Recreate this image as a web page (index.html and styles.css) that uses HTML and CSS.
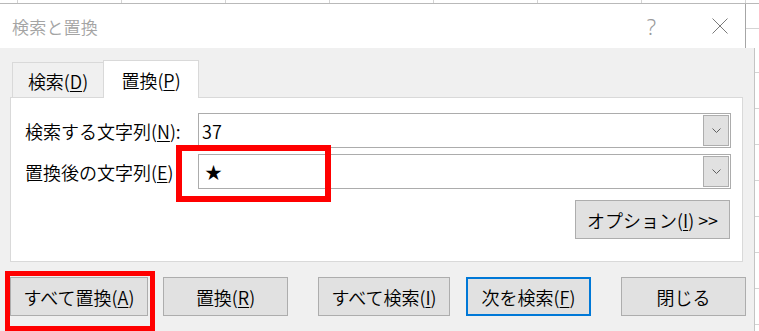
FILE: index.html
```html
<!DOCTYPE html>
<html lang="ja">
<head>
  <meta charset="UTF-8">
  <title>検索と置換</title>
  <link rel="stylesheet" href="styles.css">
</head>
<body>
  <div class="screen">
    <div class="sheet-strip"></div>
    <div class="title-row">
      <div class="titlebar">
        <span class="title">検索と置換</span>
        <span class="help">?</span>
        <svg class="close" width="16" height="16" viewBox="0 0 16 16">
          <path d="M0.5 0.5L15.5 15.5M15.5 0.5L0.5 15.5" stroke="#7a7a7a" stroke-width="1" fill="none"/>
        </svg>
      </div>
      <div class="sheet-fill top"></div>
    </div>
    <div class="body-row">
      <div class="dialog-body">
        <div class="tabs">
          <div class="tab">検索(<u>D</u>)</div>
          <div class="tab active">置換(<u>P</u>)</div>
        </div>
        <div class="panel">
          <div class="field">
            <label class="field-label">検索する文字列(<u>N</u>):</label>
            <div class="combo">
              <span class="combo-value">37</span>
              <span class="drop">
                <svg width="9" height="5" viewBox="0 0 9 5"><path d="M0.5 0.5L4.5 4.5L8.5 0.5" stroke="#606060" fill="none"/></svg>
              </span>
            </div>
          </div>
          <div class="field">
            <label class="field-label">置換後の文字列(<u>E</u>)</label>
            <div class="combo">
              <span class="combo-value star">★</span>
              <span class="drop">
                <svg width="9" height="5" viewBox="0 0 9 5"><path d="M0.5 0.5L4.5 4.5L8.5 0.5" stroke="#606060" fill="none"/></svg>
              </span>
            </div>
          </div>
          <div class="options-row">
            <button class="btn options">オプション(<u>I</u>) &gt;&gt;</button>
          </div>
        </div>
        <div class="actions">
          <button class="btn replace-all">すべて置換(<u>A</u>)</button>
          <button class="btn replace">置換(<u>R</u>)</button>
          <button class="btn find-all">すべて検索(<u>I</u>)</button>
          <button class="btn find-next default">次を検索(<u>F</u>)</button>
          <button class="btn close-btn">閉じる</button>
        </div>
      </div>
      <div class="sheet-fill"></div>
    </div>

    <!-- red annotation boxes -->
    <div class="mark mark-input"></div>
    <div class="mark mark-replace-all"></div>
  </div>
</body>
</html>
```

FILE: styles.css
```css
body {
  margin: 0;
  background: #ffffff;
  font-family: "Noto Sans CJK JP", "Noto Sans", sans-serif;
  font-weight: 350;
  color: #000;
}
.screen {
  position: relative;
  width: 759px;
  height: 331px;
  overflow: hidden;
  display: flex;
  flex-direction: column;
}
u {
  text-underline-offset: 2px;
  text-decoration-thickness: 1px;
}

/* spreadsheet showing behind the dialog */
.sheet-strip {
  height: 3px;
  border-bottom: 1px solid #b9b9b9;
  background-image: linear-gradient(to right, #d4d4d4 1px, transparent 1px);
  background-size: 104px 100%;
  background-position: 17px 0;
}
.sheet-fill {
  flex: 1;
  background-color: #ffffff;
  background-image: linear-gradient(to bottom, #d4d4d4 1px, transparent 1px);
  background-size: 100% 36px;
  background-position: 0 24px;
}

/* title bar */
.title-row {
  display: flex;
  height: 44px;
}
.titlebar {
  width: 746px;
  border-right: 1px solid #a6a6a6;
  background: #ffffff;
  display: flex;
  align-items: center;
  padding-left: 12px;
  box-sizing: border-box;
}
.title {
  flex: 1;
  font-size: 17px;
  color: #a4a4a4;
  letter-spacing: 0.2px;
}
.help {
  font-family: "Noto Sans", sans-serif;
  font-size: 22px;
  font-weight: 300;
  color: #9a9a9a;
  margin-right: 56px;
  margin-top: -1px;
}
.close {
  margin-right: 17px;
}

/* dialog body */
.body-row {
  display: flex;
  flex: 1;
}
.dialog-body {
  width: 754px;
  border-right: 1px solid #c4c4c4;
  background: #f0f0f0;
  padding-top: 12px;
}
.tabs {
  display: flex;
  align-items: flex-end;
  padding-left: 12px;
  height: 37px;
}
.tab {
  box-sizing: border-box;
  width: 91px;
  height: 35px;
  border-top: 1px solid #d9d9d9;
  border-left: 1px solid #d9d9d9;
  font-size: 18px;
  display: flex;
  align-items: center;
  justify-content: center;
  padding-top: 1px;
}
.tab.active {
  width: 96px;
  height: 38px;
  margin-bottom: -1px;
  border-right: 1px solid #d9d9d9;
  background: #ffffff;
  position: relative;
  z-index: 1;
  padding-top: 0;
}

.panel {
  box-sizing: border-box;
  margin-left: 10px;
  width: 733px;
  height: 165px;
  background: #ffffff;
  border: 1px solid #d9d9d9;
  padding: 15px 11px 0 14px;
}
.field {
  display: flex;
  align-items: center;
  height: 35px;
  margin-bottom: 6px;
}
.field-label {
  width: 173px;
  font-size: 18px;
  white-space: nowrap;
}
.combo {
  box-sizing: border-box;
  flex: 1;
  height: 35px;
  border: 1px solid #acacac;
  display: flex;
  align-items: center;
  padding: 1px 1px 1px 3px;
}
.combo-value {
  flex: 1;
  font-size: 18px;
}
.combo-value.star {
  padding-left: 3px;
  font-size: 17px;
}
.drop {
  box-sizing: border-box;
  width: 26px;
  height: 31px;
  background: #e1e1e1;
  border: 1px solid #adadad;
  display: flex;
  align-items: center;
  justify-content: center;
}
.options-row {
  display: flex;
  justify-content: flex-end;
  margin-top: 11px;
  padding-right: 1px;
}

/* buttons */
.btn {
  box-sizing: border-box;
  height: 39px;
  background: #e1e1e1;
  border: 1px solid #adadad;
  font-family: "Noto Sans CJK JP", "Noto Sans", sans-serif;
  font-weight: 350;
  font-size: 18px;
  color: #000;
  padding: 0;
  white-space: nowrap;
}
.btn.options {
  width: 155px;
}
.btn.default {
  border: 2px solid #0078d7;
}
.actions {
  display: flex;
  margin-top: 15px;
}
.replace-all {
  width: 138px;
  margin-left: 10px;
}
.replace {
  width: 125px;
  margin-left: 15px;
}
.find-all {
  width: 132px;
  margin-left: 30px;
}
.find-next {
  width: 125px;
  margin-left: 16px;
}
.close-btn {
  width: 125px;
  margin-left: 30px;
}

/* red highlight boxes drawn over the dialog */
.mark {
  position: absolute;
  box-sizing: border-box;
  border: 6px solid #ff0000;
}
.mark-input {
  left: 176px;
  top: 145px;
  width: 155px;
  height: 57px;
}
.mark-replace-all {
  left: 5px;
  top: 271px;
  width: 150px;
  height: 60px;
  border-width: 5px;
}
```
